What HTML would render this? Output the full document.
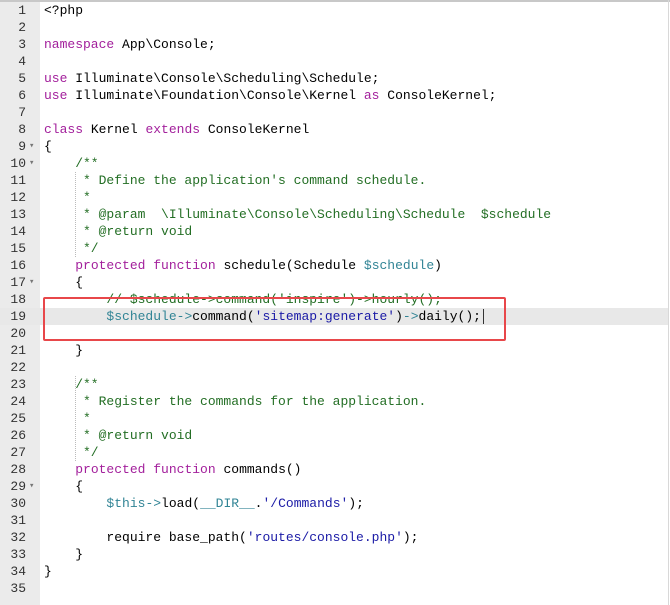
<!DOCTYPE html>
<html><head><meta charset="utf-8"><style>
*{margin:0;padding:0}
body{width:670px;height:605px;background:#fff;position:relative;overflow:hidden;font-family:"Liberation Mono",monospace;font-size:13px;}
.top{position:absolute;left:0;top:0;width:670px;height:2px;background:#c8c8c8}
.right{position:absolute;right:1px;top:0;width:1px;height:605px;background:#d8d8d8}
.gut{position:absolute;left:0;top:2px;width:40px;height:603px;background:#ebebeb}
.hl{position:absolute;left:0;top:308px;width:668px;height:17px;background:#e8e8e8}
.l{position:absolute;left:0;height:17px;line-height:17px;white-space:pre;width:668px}
.n{position:absolute;left:0;width:26px;text-align:right;color:#333}
.f{position:absolute;left:29px;color:#777;font-size:9px}
.c{position:absolute;left:44px;color:#000}
.k{color:#a3209c}.v{color:#318495}.s{color:#1a1aa6}.m{color:#236e24}
.box{position:absolute;left:43px;top:297px;width:459px;height:40px;border:2px solid #e8474a;border-radius:2px}
.g{position:absolute;width:0;border-left:1px dotted #bbb}
.caret{display:inline-block;width:1px;height:15px;background:#333;vertical-align:middle;margin-left:2px}
</style></head><body>
<div class="top"></div><div class="gut"></div><div class="hl"></div><div class="right"></div>
<div class="g" style="left:75px;top:172px;height:85px"></div>
<div class="g" style="left:75px;top:376px;height:85px"></div>
<div class="l" style="top:2px"><span class="n">1</span><span class="c">&lt;?php</span></div>
<div class="l" style="top:19px"><span class="n">2</span></div>
<div class="l" style="top:36px"><span class="n">3</span><span class="c"><span class="k">namespace</span> App\Console;</span></div>
<div class="l" style="top:53px"><span class="n">4</span></div>
<div class="l" style="top:70px"><span class="n">5</span><span class="c"><span class="k">use</span> Illuminate\Console\Scheduling\Schedule;</span></div>
<div class="l" style="top:87px"><span class="n">6</span><span class="c"><span class="k">use</span> Illuminate\Foundation\Console\Kernel <span class="k">as</span> ConsoleKernel;</span></div>
<div class="l" style="top:104px"><span class="n">7</span></div>
<div class="l" style="top:121px"><span class="n">8</span><span class="c"><span class="k">class</span> Kernel <span class="k">extends</span> ConsoleKernel</span></div>
<div class="l" style="top:138px"><span class="n">9</span><span class="f">▾</span><span class="c">{</span></div>
<div class="l" style="top:155px"><span class="n">10</span><span class="f">▾</span><span class="c m">    /**</span></div>
<div class="l" style="top:172px"><span class="n">11</span><span class="c m">     * Define the application's command schedule.</span></div>
<div class="l" style="top:189px"><span class="n">12</span><span class="c m">     *</span></div>
<div class="l" style="top:206px"><span class="n">13</span><span class="c m">     * @param  \Illuminate\Console\Scheduling\Schedule  $schedule</span></div>
<div class="l" style="top:223px"><span class="n">14</span><span class="c m">     * @return void</span></div>
<div class="l" style="top:240px"><span class="n">15</span><span class="c m">     */</span></div>
<div class="l" style="top:257px"><span class="n">16</span><span class="c">    <span class="k">protected</span> <span class="k">function</span> schedule(Schedule <span class="v">$schedule</span>)</span></div>
<div class="l" style="top:274px"><span class="n">17</span><span class="f">▾</span><span class="c">    {</span></div>
<div class="l" style="top:291px"><span class="n">18</span><span class="c m">        // $schedule->command('inspire')->hourly();</span></div>
<div class="l" style="top:308px"><span class="n">19</span><span class="c">        <span class="v">$schedule</span><span class="v">-&gt;</span>command(<span class="s">'sitemap:generate'</span>)<span class="v">-&gt;</span>daily();<span class="caret"></span></span></div>
<div class="l" style="top:325px"><span class="n">20</span></div>
<div class="l" style="top:342px"><span class="n">21</span><span class="c">    }</span></div>
<div class="l" style="top:359px"><span class="n">22</span></div>
<div class="l" style="top:376px"><span class="n">23</span><span class="c m">    /**</span></div>
<div class="l" style="top:393px"><span class="n">24</span><span class="c m">     * Register the commands for the application.</span></div>
<div class="l" style="top:410px"><span class="n">25</span><span class="c m">     *</span></div>
<div class="l" style="top:427px"><span class="n">26</span><span class="c m">     * @return void</span></div>
<div class="l" style="top:444px"><span class="n">27</span><span class="c m">     */</span></div>
<div class="l" style="top:461px"><span class="n">28</span><span class="c">    <span class="k">protected</span> <span class="k">function</span> commands()</span></div>
<div class="l" style="top:478px"><span class="n">29</span><span class="f">▾</span><span class="c">    {</span></div>
<div class="l" style="top:495px"><span class="n">30</span><span class="c">        <span class="v">$this</span><span class="v">-&gt;</span>load(<span class="v">__DIR__</span>.<span class="s">'/Commands'</span>);</span></div>
<div class="l" style="top:512px"><span class="n">31</span></div>
<div class="l" style="top:529px"><span class="n">32</span><span class="c">        require base_path(<span class="s">'routes/console.php'</span>);</span></div>
<div class="l" style="top:546px"><span class="n">33</span><span class="c">    }</span></div>
<div class="l" style="top:563px"><span class="n">34</span><span class="c">}</span></div>
<div class="l" style="top:580px"><span class="n">35</span></div>
<div class="box"></div>
</body></html>
